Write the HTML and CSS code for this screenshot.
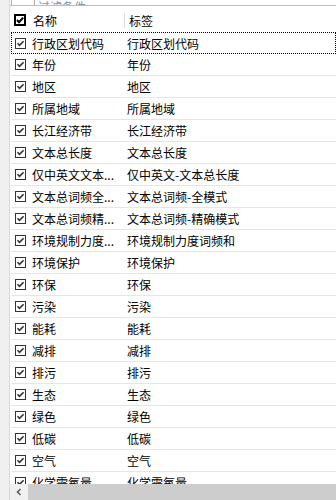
FILE: index.html
```html
<!DOCTYPE html>
<html lang="zh">

<head>
    <meta charset="UTF-8">
    <title>字段列表</title>
    <link rel="stylesheet" href="styles.css">
</head>

<body>

    <div class="panel">

        <div class="side"></div>

        <div class="main">

            <div class="toolbar">
                <div class="combo"><span class="combo-arrow">&#709;</span></div>
                <span class="filter-text">过滤条件</span>
            </div>

            <div class="list">

                <div class="head">
                    <span class="head-check">
                        <svg width="12" height="12" viewBox="0 0 12 12">
                            <rect x="1" y="1" width="10" height="10" fill="#fff" stroke="#000" stroke-width="2"/>
                            <path d="M3 6 L5 8.2 L9.2 3.6" fill="none" stroke="#000" stroke-width="2"/>
                        </svg>
                    </span>
                    <span class="col-name">名称</span>
                    <span class="col-sep"></span>
                    <span class="col-label">标签</span>
                </div>

                <div id="rows"></div>

            </div>

            <div class="hscroll">
                <div class="hscroll-btn">
                    <svg width="8" height="8" viewBox="0 0 8 8">
                        <path d="M5.5 1 L2.5 4 L5.5 7" fill="none" stroke="#606060" stroke-width="1.6"/>
                    </svg>
                </div>
                <div class="hscroll-thumb"></div>
            </div>

        </div>

    </div>

    <script>
        document.addEventListener('DOMContentLoaded', () => {
            const rows = document.getElementById('rows');
            const fields = [
                ['行政区划代码', '行政区划代码'],
                ['年份', '年份'],
                ['地区', '地区'],
                ['所属地域', '所属地域'],
                ['长江经济带', '长江经济带'],
                ['文本总长度', '文本总长度'],
                ['仅中英文文本...', '仅中英文-文本总长度'],
                ['文本总词频全...', '文本总词频-全模式'],
                ['文本总词频精...', '文本总词频-精确模式'],
                ['环境规制力度...', '环境规制力度词频和'],
                ['环境保护', '环境保护'],
                ['环保', '环保'],
                ['污染', '污染'],
                ['能耗', '能耗'],
                ['减排', '减排'],
                ['排污', '排污'],
                ['生态', '生态'],
                ['绿色', '绿色'],
                ['低碳', '低碳'],
                ['空气', '空气'],
                ['化学需氧量', '化学需氧量']
            ];

            const check = `
                <svg width="11" height="11" viewBox="0 0 11 11">
                    <rect x="0.5" y="0.5" width="10" height="10" fill="#fff" stroke="#333"/>
                    <path d="M2.5 5.3 L4.5 7.4 L8.6 3.2" fill="none" stroke="#333" stroke-width="1.6"/>
                </svg>`;

            fields.forEach((field, i) => {
                const row = document.createElement('div');
                row.className = i === 0 ? 'row focused' : 'row';
                row.innerHTML = `
                    <span class="row-check">${check}</span>
                    <span class="row-name">${field[0]}</span>
                    <span class="row-label">${field[1]}</span>
                `;
                rows.appendChild(row);
            });
        });
    </script>
</body>

</html>
```

FILE: styles.css
```css
* {
    margin: 0;
    padding: 0;
    box-sizing: border-box;
}

body {
    width: 336px;
    height: 500px;
    overflow: hidden;
    background-color: #f0f0f0;
    font-family: "Noto Sans CJK SC", "Noto Sans", sans-serif;
    font-size: 12px;
    color: #000;
}

.panel {
    display: flex;
    height: 500px;
}

.side {
    width: 10px;
    flex-shrink: 0;
    background-color: #f0f0f0;
    border-right: 1px solid #d9d9d9;
}

.main {
    flex: 1;
    display: flex;
    flex-direction: column;
    min-width: 0;
    background-color: #fff;
}

.toolbar {
    height: 6px;
    flex-shrink: 0;
    display: flex;
    align-items: flex-end;
    gap: 3px;
    overflow: hidden;
    border-bottom: 1px solid #bdbdbd;
}

.combo {
    width: 24px;
    height: 18px;
    flex-shrink: 0;
    margin-left: 1px;
    margin-bottom: -1px;
    border-left: 1px solid #b0b0b0;
    border-right: 1px solid #b0b0b0;
    position: relative;
}

.combo-arrow {
    position: absolute;
    right: 2px;
    bottom: 0;
    font-size: 11px;
    line-height: 11px;
    color: #555;
}

.filter-text {
    color: #7f97b3;
    line-height: 16px;
    margin-bottom: -10px;
}

.list {
    flex: 1;
    overflow: hidden;
}

.head {
    height: 26px;
    display: flex;
    align-items: center;
    padding-top: 2px;
    padding-left: 4px;
}

.head-check {
    display: flex;
    width: 12px;
    height: 12px;
    margin-right: 7px;
}

.col-name {
    width: 91px;
}

.col-sep {
    width: 1px;
    height: 15px;
    margin-right: 4px;
    background-color: #dcdcdc;
}

.row {
    height: 22px;
    margin-left: 1px;
    display: flex;
    align-items: center;
    padding-left: 4px;
    border-bottom: 1px solid #e6e6e6;
    white-space: nowrap;
}

.row.focused {
    border: 1px dotted #000;
    padding-left: 3px;
}

.row-check {
    display: flex;
    width: 11px;
    height: 11px;
    margin-right: 6px;
}

.row-name {
    width: 95px;
    overflow: hidden;
}

.hscroll {
    height: 16px;
    flex-shrink: 0;
    display: flex;
    background-color: #f0f0f0;
}

.hscroll-btn {
    width: 18px;
    display: flex;
    align-items: center;
    justify-content: center;
}

.hscroll-thumb {
    flex: 1;
    background-color: #cdcdcd;
}
```
